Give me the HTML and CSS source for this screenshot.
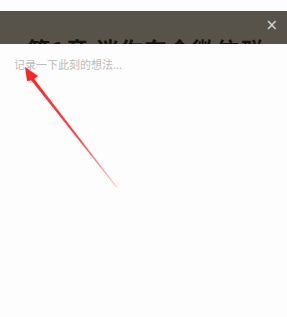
FILE: index.html
```html
<!DOCTYPE html>
<html lang="zh">
<head>
<meta charset="utf-8">
<link rel="stylesheet" href="styles.css">
</head>
<body>
<div class="page">
  <div class="header">
    <div class="title">第1章 迷你东今微信群</div>
    <span class="close">×</span>
  </div>
  <div class="editor">
    <div class="placeholder">记录一下此刻的想法...</div>
  </div>
  <svg class="arrow" width="287" height="317" viewBox="0 0 287 317">
    <defs>
      <linearGradient id="g" x1="117" y1="187" x2="25" y2="67" gradientUnits="userSpaceOnUse">
        <stop offset="0" stop-color="#ff4a4a" stop-opacity="0.35"/>
        <stop offset="0.4" stop-color="#ff3030" stop-opacity="0.9"/>
        <stop offset="1" stop-color="#ff2020"/>
      </linearGradient>
    </defs>
    <polygon points="117,187 116.4,187.4 31,80 33.5,78" fill="url(#g)"/>
    <polygon points="25,67 38,76 33.6,79.6 31,80.5 27,81" fill="#ff2525"/>
  </svg>
</div>
</body>
</html>
```
FILE: styles.css
```css
html, body {
  margin: 0;
  padding: 0;
  background: #fdfdfd;
}
.page {
  position: relative;
  width: 287px;
  height: 317px;
  padding-top: 11px;
  box-sizing: border-box;
  background: #fdfdfd;
  font-family: "Noto Sans CJK SC", "Noto Sans", sans-serif;
  overflow: hidden;
}
.header {
  position: relative;
  height: 33px;
  background: #57524a;
  overflow: hidden;
  display: flex;
  justify-content: center;
}
.title {
  margin-top: 23px;
  margin-left: 4px;
  font-size: 23px;
  line-height: 30px;
  font-weight: 700;
  color: #151310;
  white-space: nowrap;
  letter-spacing: 1px;
}
.close {
  position: absolute;
  right: 9px;
  top: 3px;
  font-family: "DejaVu Sans", sans-serif;
  font-size: 15px;
  line-height: 22px;
  color: #d9d7d2;
}
.editor {
  padding: 12px 14px;
}
.placeholder {
  font-size: 11px;
  line-height: 16px;
  color: #bcbcbc;
}
.arrow {
  position: absolute;
  left: 0;
  top: 0;
}
```
